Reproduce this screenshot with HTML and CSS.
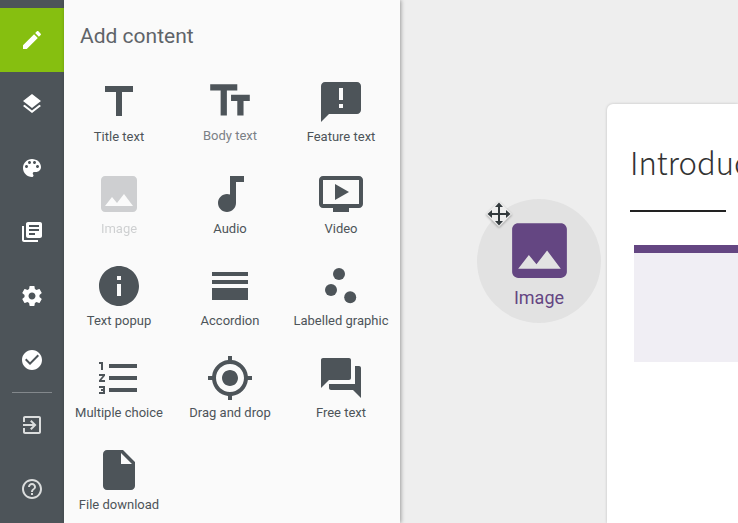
FILE: index.html
```html
<!DOCTYPE html>
<html lang="en">
<head>
    <meta charset="UTF-8">
    <meta name="viewport" content="width=device-width, initial-scale=1">
    <title>Add content</title>
    <link rel="stylesheet" href="styles.css">
</head>
<body>
<div class="app">

    <!-- Main menu -->
    <nav class="sidebar">
        <button class="nav-item active" aria-label="Edit">
            <svg viewBox="0 0 24 24"><path d="M3 17.25V21h3.75L17.81 9.94l-3.75-3.75L3 17.25zM20.71 7.04c.39-.39.39-1.02 0-1.41l-2.34-2.34c-.39-.39-1.02-.39-1.41 0l-1.83 1.83 3.75 3.75 1.83-1.83z"/></svg>
        </button>
        <button class="nav-item" aria-label="Layers">
            <svg viewBox="0 0 24 24"><path d="M11.99 18.54l-7.37-5.73L3 14.07l9 7 9-7-1.63-1.27-7.38 5.74zM12 16l7.36-5.73L21 9l-9-7-9 7 1.63 1.27L12 16z"/></svg>
        </button>
        <button class="nav-item" aria-label="Theme">
            <svg viewBox="0 0 24 24"><path d="M12 3c-4.97 0-9 4.03-9 9s4.03 9 9 9c.83 0 1.5-.67 1.5-1.5 0-.39-.15-.74-.39-1.01-.23-.26-.38-.61-.38-.99 0-.83.67-1.5 1.5-1.5H16c2.76 0 5-2.24 5-5 0-4.42-4.03-8-9-8zm-5.5 9c-.83 0-1.5-.67-1.5-1.5S5.67 9 6.5 9 8 9.67 8 10.5 7.33 12 6.5 12zm3-4C8.67 8 8 7.33 8 6.5S8.67 5 9.5 5s1.5.67 1.5 1.5S10.33 8 9.5 8zm5 0c-.83 0-1.5-.67-1.5-1.5S13.67 5 14.5 5s1.5.67 1.5 1.5S15.33 8 14.5 8zm3 4c-.83 0-1.5-.67-1.5-1.5S16.67 9 17.5 9s1.5.67 1.5 1.5-.67 1.5-1.5 1.5z"/></svg>
        </button>
        <button class="nav-item" aria-label="Library">
            <svg viewBox="0 0 24 24"><path d="M4 6H2v14c0 1.1.9 2 2 2h14v-2H4V6zm16-4H8c-1.1 0-2 .9-2 2v12c0 1.1.9 2 2 2h12c1.1 0 2-.9 2-2V4c0-1.1-.9-2-2-2zm-1 9H9V9h10v2zm-4 4H9v-2h6v2zm4-8H9V5h10v2z"/></svg>
        </button>
        <button class="nav-item" aria-label="Settings">
            <svg viewBox="0 0 24 24"><path d="M19.43 12.98c.04-.32.07-.64.07-.98s-.03-.66-.07-.98l2.11-1.65c.19-.15.24-.42.12-.64l-2-3.46c-.12-.22-.39-.3-.61-.22l-2.49 1c-.52-.4-1.08-.73-1.69-.98l-.38-2.65C14.46 2.18 14.25 2 14 2h-4c-.25 0-.46.18-.49.42l-.38 2.65c-.61.25-1.17.59-1.69.98l-2.49-1c-.23-.09-.49 0-.61.22l-2 3.46c-.13.22-.07.49.12.64l2.11 1.65c-.04.32-.07.65-.07.98s.03.66.07.98l-2.11 1.65c-.19.15-.24.42-.12.64l2 3.46c.12.22.39.3.61.22l2.49-1c.52.4 1.08.73 1.69.98l.38 2.65c.03.24.24.42.49.42h4c.25 0 .46-.18.49-.42l.38-2.65c.61-.25 1.17-.59 1.69-.98l2.49 1c.23.09.49 0 .61-.22l2-3.46c.12-.22.07-.49-.12-.64l-2.11-1.65zM12 15.5c-1.93 0-3.5-1.57-3.5-3.5s1.57-3.5 3.5-3.5 3.5 1.57 3.5 3.5-1.57 3.5-3.5 3.5z"/></svg>
        </button>
        <button class="nav-item" aria-label="Publish">
            <svg viewBox="0 0 24 24"><path d="M12 2C6.48 2 2 6.48 2 12s4.48 10 10 10 10-4.48 10-10S17.52 2 12 2zm-2 15l-5-5 1.41-1.41L10 14.17l7.59-7.59L19 8l-9 9z"/></svg>
        </button>
        <hr>
        <button class="nav-item minor" aria-label="Exit">
            <svg viewBox="0 0 24 24"><path d="M10.09 15.59L11.5 17l5-5-5-5-1.41 1.41L12.67 11H3v2h9.67l-2.58 2.59zM19 3H5c-1.11 0-2 .9-2 2v4h2V5h14v14H5v-4H3v4c0 1.1.89 2 2 2h14c1.1 0 2-.9 2-2V5c0-1.1-.9-2-2-2z"/></svg>
        </button>
        <button class="nav-item minor" aria-label="Help">
            <svg viewBox="0 0 24 24"><path d="M11 18h2v-2h-2v2zm1-16C6.48 2 2 6.48 2 12s4.48 10 10 10 10-4.48 10-10S17.52 2 12 2zm0 18c-4.41 0-8-3.59-8-8s3.59-8 8-8 8 3.59 8 8-3.59 8-8 8zm0-14c-2.21 0-4 1.79-4 4h2c0-1.1.9-2 2-2s2 .9 2 2c0 2-3 1.75-3 5h2c0-2.25 3-2.5 3-5 0-2.21-1.79-4-4-4z"/></svg>
        </button>
    </nav>

    <!-- Content types -->
    <aside class="panel">
        <h2>Add content</h2>
        <div class="tools">
            <button class="tool">
                <svg viewBox="0 0 24 24"><path d="M5 4v3h5.5v12h3V7H19V4z"/></svg>
                <span>Title text</span>
            </button>
            <button class="tool hovered">
                <svg viewBox="0 0 24 24"><path d="M2.5 4v3h5v12h3V7h5V4h-13zm19 5h-9v3h3v7h3v-7h3V9z"/></svg>
                <span>Body text</span>
            </button>
            <button class="tool">
                <svg viewBox="0 0 24 24"><path d="M20 2H4c-1.1 0-1.99.9-1.99 2L2 22l4-4h14c1.1 0 2-.9 2-2V4c0-1.1-.9-2-2-2zm-7 9h-2V5h2v6zm0 4h-2v-2h2v2z"/></svg>
                <span>Feature text</span>
            </button>
            <button class="tool" disabled>
                <svg viewBox="0 0 24 24"><path d="M21 19V5c0-1.1-.9-2-2-2H5c-1.1 0-2 .9-2 2v14c0 1.1.9 2 2 2h14c1.1 0 2-.9 2-2zM8.5 13.5l2.5 3.01L14.5 12l4.5 6H5l3.5-4.5z"/></svg>
                <span>Image</span>
            </button>
            <button class="tool">
                <svg viewBox="0 0 24 24"><path d="M12 3v9.28c-.47-.17-.97-.28-1.5-.28C8.01 12 6 14.01 6 16.5S8.01 21 10.5 21s4.5-2.01 4.5-4.5V6h4V3h-7z"/></svg>
                <span>Audio</span>
            </button>
            <button class="tool">
                <svg viewBox="0 0 24 24"><path d="M21 3H3c-1.11 0-2 .89-2 2v12c0 1.1.89 2 2 2h5v2h8v-2h5c1.1 0 1.99-.9 1.99-2L23 5c0-1.11-.9-2-2-2zm0 14H3V5h18v12zm-5-6l-7 4V7z"/></svg>
                <span>Video</span>
            </button>
            <button class="tool">
                <svg viewBox="0 0 24 24"><path d="M12 2C6.48 2 2 6.48 2 12s4.48 10 10 10 10-4.48 10-10S17.52 2 12 2zm1 15h-2v-6h2v6zm0-8h-2V7h2v2z"/></svg>
                <span>Text popup</span>
            </button>
            <button class="tool">
                <svg viewBox="0 0 24 24"><path d="M3 5h18v2H3zM3 9h18v2H3zM3 13h18v6H3z"/></svg>
                <span>Accordion</span>
            </button>
            <button class="tool">
                <svg viewBox="0 0 24 24"><circle cx="11" cy="6" r="3"/><circle cx="7" cy="14" r="3"/><circle cx="16.6" cy="17.6" r="3"/></svg>
                <span>Labelled graphic</span>
            </button>
            <button class="tool">
                <svg viewBox="0 0 24 24"><path d="M2 17h2v.5H3v1h1v.5H2v1h3v-4H2v1zm1-9h1V4H2v1h1v3zm-1 3h1.8L2 13.1v.9h3v-1H3.2L5 10.9V10H2v1zm5-6v2h14V5H7zm0 14h14v-2H7v2zm0-6h14v-2H7v2z"/></svg>
                <span>Multiple choice</span>
            </button>
            <button class="tool">
                <svg viewBox="0 0 24 24"><path d="M12 8c-2.21 0-4 1.79-4 4s1.79 4 4 4 4-1.79 4-4-1.79-4-4-4zm8.94 3c-.46-4.17-3.77-7.48-7.94-7.94V1h-2v2.06C6.83 3.52 3.52 6.83 3.06 11H1v2h2.06c.46 4.17 3.77 7.48 7.94 7.94V23h2v-2.06c4.17-.46 7.48-3.77 7.94-7.94H23v-2h-2.06zM12 19c-3.87 0-7-3.13-7-7s3.13-7 7-7 7 3.13 7 7-3.13 7-7 7z"/></svg>
                <span>Drag and drop</span>
            </button>
            <button class="tool">
                <svg viewBox="0 0 24 24"><path d="M21 6h-2v9H6v2c0 .55.45 1 1 1h11l4 4V7c0-.55-.45-1-1-1zm-4 6V3c0-.55-.45-1-1-1H3c-.55 0-1 .45-1 1v14l4-4h10c.55 0 1-.45 1-1z"/></svg>
                <span>Free text</span>
            </button>
            <button class="tool">
                <svg viewBox="0 0 24 24"><path d="M6 2c-1.1 0-1.99.9-1.99 2L4 20c0 1.1.89 2 1.99 2H18c1.1 0 2-.9 2-2V8l-6-6H6zm7 7V3.5L18.5 9H13z"/></svg>
                <span>File download</span>
            </button>
        </div>
    </aside>

    <!-- Page being edited -->
    <main class="canvas">
        <article class="page">
            <h1>Introduction</h1>
            <div class="rule"></div>
            <div class="block"></div>
        </article>

        <!-- Item being dragged -->
        <div class="dragged">
            <svg class="dragged-icon" viewBox="0 0 24 24"><path d="M21 19V5c0-1.1-.9-2-2-2H5c-1.1 0-2 .9-2 2v14c0 1.1.9 2 2 2h14c1.1 0 2-.9 2-2zM8.5 13.5l2.5 3.01L14.5 12l4.5 6H5l3.5-4.5z"/></svg>
            <span>Image</span>
            <svg class="move-cursor" viewBox="0 0 30 30">
                <path class="halo" d="M15 2L28 15L15 28L2 15z"/>
                <path d="M15 3.5l4 4.5h-3v6h6v-3l4.5 4-4.5 4v-3h-6v6h3l-4 4.5-4-4.5h3v-6H8v3l-4.5-4L8 11v3h6V8h-3z"/>
            </svg>
        </div>
    </main>

</div>
</body>
</html>
```
FILE: styles.css
```css
* {
    box-sizing: border-box;
}
body {
    margin: 0;
    font-family: Roboto, "Liberation Sans", sans-serif;
    color: #4d5459;
    background: #eee;
}
button {
    border: none;
    padding: 0;
    background: none;
    font: inherit;
    color: inherit;
    cursor: pointer;
}
svg {
    display: block;
    fill: currentColor;
}
.app {
    display: flex;
    height: 100vh;
    overflow: hidden;
}

/* sidebar */
.sidebar {
    flex: none;
    width: 64px;
    padding-top: 8px;
    background: #4d5459;
    color: #fff;
}
.nav-item {
    display: flex;
    align-items: center;
    justify-content: center;
    width: 100%;
    height: 64px;
}
.nav-item svg {
    width: 24px;
    height: 24px;
}
.nav-item.active {
    background: #86bf10;
}
.nav-item.minor {
    color: #dbdddd;
}
.sidebar hr {
    height: 1px;
    margin: 0 12px;
    border: none;
    background: #83888c;
}

/* content panel */
.panel {
    flex: none;
    width: 336px;
    background: #fafafa;
    box-shadow: 1px 0 4px rgba(0, 0, 0, 0.35);
    z-index: 1;
}
.panel h2 {
    margin: 0;
    padding: 24px 16px 30px;
    font-size: 21px;
    font-weight: 400;
    line-height: 24px;
    color: #5f6469;
}
.tools {
    display: grid;
    grid-template-columns: repeat(3, 1fr);
    gap: 24px 1px;
    padding-right: 4px;
}
.tool {
    display: flex;
    flex-direction: column;
    align-items: center;
    height: 68px;
    font-size: 13px;
    line-height: 22px;
    white-space: nowrap;
}
.tool svg {
    flex: none;
    width: 48px;
    height: 48px;
}
.tool.hovered svg {
    width: 50px;
    height: 50px;
    margin: -2px 0 -1px;
}
.tool.hovered span {
    color: #7a8086;
}
.tool:disabled {
    opacity: 0.25;
    cursor: default;
}

/* canvas */
.canvas {
    position: relative;
    flex: 1;
    min-width: 0;
    padding: 104px 0 0 207px;
    overflow: hidden;
}
.page {
    height: 100%;
    padding: 36px 0 0 23px;
    overflow: hidden;
    background: #fff;
    border-radius: 6px 0 0 0;
    box-shadow: 0 0 3px rgba(0, 0, 0, 0.2);
}
.page h1 {
    margin: 0 0 26px;
    font-family: "Noto Sans CJK SC", "Open Sans", sans-serif;
    font-size: 31px;
    font-weight: 300;
    line-height: 44px;
    color: #333;
}
.rule {
    width: 96px;
    height: 2px;
    background: #222;
}
.block {
    height: 117px;
    margin: 33px 0 0 4px;
    background: #f0eef4;
    border-top: 8px solid #644682;
}

/* dragged item */
.dragged {
    position: absolute;
    top: 199px;
    left: 77px;
    display: flex;
    flex-direction: column;
    align-items: center;
    width: 124px;
    height: 124px;
    padding-top: 15px;
    border-radius: 50%;
    background: #e2e2e2;
    color: #644682;
    font-size: 18px;
    line-height: 22px;
}
.dragged-icon {
    width: 73px;
    height: 73px;
}
.move-cursor {
    position: absolute;
    top: 0;
    left: 7px;
    width: 30px;
    height: 30px;
    color: #333a3d;
    filter: drop-shadow(0 1px 1px rgba(0, 0, 0, 0.3));
}
.move-cursor .halo {
    fill: #eee;
}
```
